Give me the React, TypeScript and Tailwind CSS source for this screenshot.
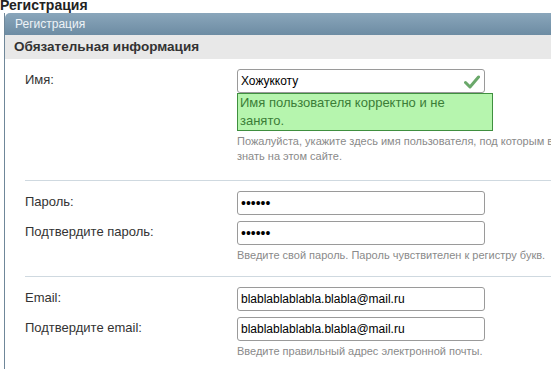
import React from 'react';

const font = { fontFamily: '"Liberation Sans", Arial, sans-serif' };

function CheckIcon() {
    return (
        <svg width="16" height="14" viewBox="0 0 16 14" className="absolute right-[4px] top-[5px]">
            <path d="M1.5 7.5 L6 12 L14.5 2" fill="none" stroke="#6aa86a" strokeWidth="3" strokeLinecap="round" strokeLinejoin="round" />
        </svg>
    );
}

interface FieldProps {
    label: string;
    value: string;
    password?: boolean;
    check?: boolean;
}

function Field({ label, value, password, check }: FieldProps) {
    return (
        <div className="flex">
            <div className="w-[212px] pt-[1px] text-[13px] text-[#333]">{label}</div>
            <div className="relative flex h-[24px] w-[248px] items-center rounded-[3px] border border-[#9a9a9a] bg-white px-[3px] text-[12px] text-black">
                {password ? <span className="text-[14px] leading-none">••••••</span> : value}
                {check && <CheckIcon />}
            </div>
        </div>
    );
}

function Hint({ children }: { children: React.ReactNode }) {
    return (
        <div className="ml-[212px] whitespace-nowrap text-[11px] leading-[15px] text-[#8a8a8a]">{children}</div>
    );
}

export default function App() {
    return (
        <div className="h-[369px] w-[551px] overflow-hidden bg-white" style={font}>
            {/* Page title */}
            <div className="-mt-[3px] h-[16px] text-[14px] font-bold leading-[16px] text-[#222]">Регистрация</div>

            {/* Panel */}
            <div className="ml-[4px] h-full border-l border-[#6f8799]">
                <div className="flex h-[22px] items-center rounded-tl-[5px] bg-gradient-to-b from-[#8aa6bb] to-[#6d8ca3] pl-[10px] text-[12px] text-[#eef3f7]">
                    Регистрация
                </div>
                <div className="flex h-[24px] items-center bg-[#e8e8e8] pl-[9px] text-[13.5px] font-bold text-[#333]">
                    Обязательная информация
                </div>

                <div className="pl-[20px]">
                    {/* Name */}
                    <div className="pt-[10px] pb-[16px]">
                        <Field label="Имя:" value="Хожуккоту" check />
                        <div className="ml-[212px] w-[256px] border border-[#3f8f3f] bg-[#b6f5ae] px-[2px] text-[13px] leading-[18px] text-[#3b7d37]">
                            Имя пользователя корректно и не занято.
                        </div>
                        <div className="mt-[3px]">
                            <Hint>Пожалуйста, укажите здесь имя пользователя, под которым вы хотите быть известны</Hint>
                            <Hint>знать на этом сайте.</Hint>
                        </div>
                    </div>

                    <div className="border-t border-[#cfd9e0]" />

                    {/* Password */}
                    <div className="flex flex-col gap-[6px] pt-[10px]">
                        <Field label="Пароль:" value="" password />
                        <Field label="Подтвердите пароль:" value="" password />
                    </div>
                    <div className="pt-[3px] pb-[13px]">
                        <Hint>Введите свой пароль. Пароль чувствителен к регистру букв.</Hint>
                    </div>

                    <div className="border-t border-[#cfd9e0]" />

                    {/* Email */}
                    <div className="flex flex-col gap-[6px] pt-[10px]">
                        <Field label="Email:" value="blablablablabla.blabla@mail.ru" />
                        <Field label="Подтвердите email:" value="blablablablabla.blabla@mail.ru" />
                    </div>
                    <div className="pt-[3px]">
                        <Hint>Введите правильный адрес электронной почты.</Hint>
                    </div>
                </div>
            </div>
        </div>
    );
}
